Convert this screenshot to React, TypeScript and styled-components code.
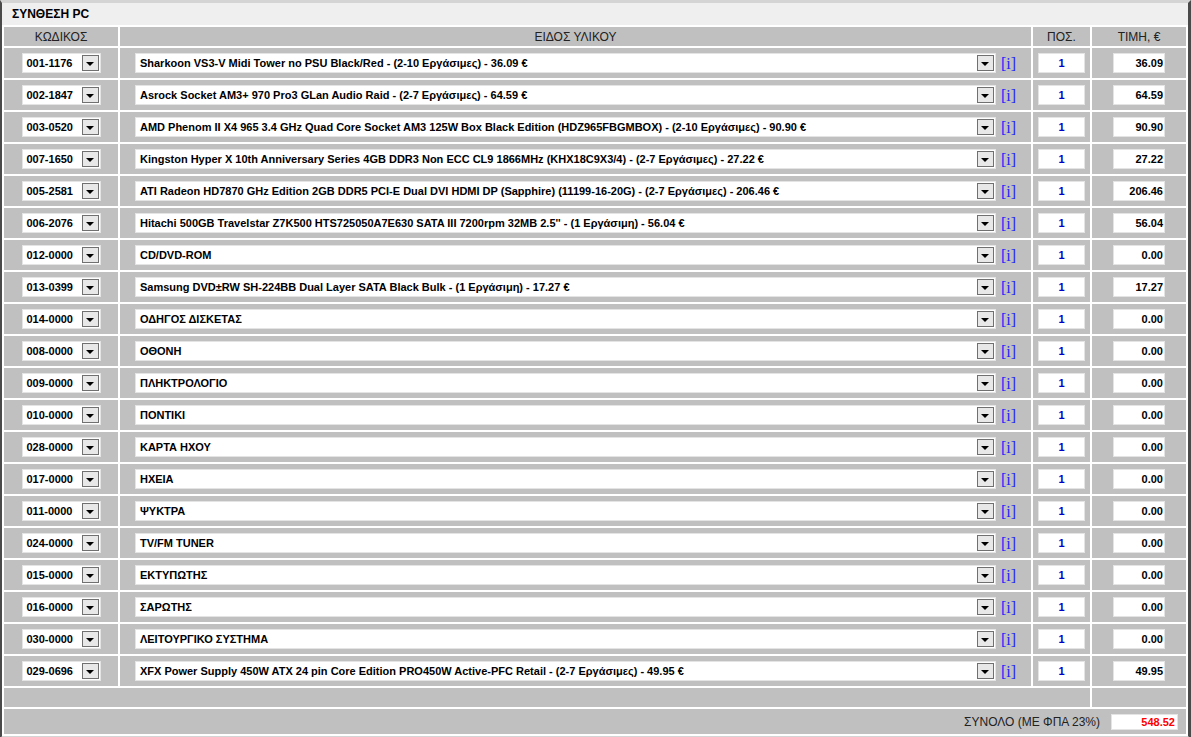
import React from 'react'
import styled, { createGlobalStyle } from 'styled-components'

interface Row {
  code: string
  name: string
  price: string
}

const rows: Row[] = [
  { code: '001-1176', name: 'Sharkoon VS3-V Midi Tower no PSU Black/Red - (2-10 Εργάσιμες) - 36.09 €', price: '36.09' },
  { code: '002-1847', name: 'Asrock Socket AM3+ 970 Pro3 GLan Audio Raid - (2-7 Εργάσιμες) - 64.59 €', price: '64.59' },
  {
    code: '003-0520',
    name: 'AMD Phenom II X4 965 3.4 GHz Quad Core Socket AM3 125W Box Black Edition (HDZ965FBGMBOX) - (2-10 Εργάσιμες) - 90.90 €',
    price: '90.90',
  },
  {
    code: '007-1650',
    name: 'Kingston Hyper X 10th Anniversary Series 4GB DDR3 Non ECC CL9 1866MHz (KHX18C9X3/4) - (2-7 Εργάσιμες) - 27.22 €',
    price: '27.22',
  },
  {
    code: '005-2581',
    name: 'ATI Radeon HD7870 GHz Edition 2GB DDR5 PCI-E Dual DVI HDMI DP (Sapphire) (11199-16-20G) - (2-7 Εργάσιμες) - 206.46 €',
    price: '206.46',
  },
  {
    code: '006-2076',
    name: "Hitachi 500GB Travelstar Z7K500 HTS725050A7E630 SATA III 7200rpm 32MB 2.5'' - (1 Εργάσιμη) - 56.04 €",
    price: '56.04',
  },
  { code: '012-0000', name: 'CD/DVD-ROM', price: '0.00' },
  { code: '013-0399', name: 'Samsung DVD±RW SH-224BB Dual Layer SATA Black Bulk - (1 Εργάσιμη) - 17.27 €', price: '17.27' },
  { code: '014-0000', name: 'ΟΔΗΓΟΣ ΔΙΣΚΕΤΑΣ', price: '0.00' },
  { code: '008-0000', name: 'ΟΘΟΝΗ', price: '0.00' },
  { code: '009-0000', name: 'ΠΛΗΚΤΡΟΛΟΓΙΟ', price: '0.00' },
  { code: '010-0000', name: 'ΠΟΝΤΙΚΙ', price: '0.00' },
  { code: '028-0000', name: 'ΚΑΡΤΑ ΗΧΟΥ', price: '0.00' },
  { code: '017-0000', name: 'ΗΧΕΙΑ', price: '0.00' },
  { code: '011-0000', name: 'ΨΥΚΤΡΑ', price: '0.00' },
  { code: '024-0000', name: 'TV/FM TUNER', price: '0.00' },
  { code: '015-0000', name: 'ΕΚΤΥΠΩΤΗΣ', price: '0.00' },
  { code: '016-0000', name: 'ΣΑΡΩΤΗΣ', price: '0.00' },
  { code: '030-0000', name: 'ΛΕΙΤΟΥΡΓΙΚΟ ΣΥΣΤΗΜΑ', price: '0.00' },
  {
    code: '029-0696',
    name: 'XFX Power Supply 450W ATX 24 pin Core Edition PRO450W Active-PFC Retail - (2-7 Εργάσιμες) - 49.95 €',
    price: '49.95',
  },
]

const GlobalStyle = createGlobalStyle`
  body {
    margin: 0;
    background: #fff;
    font-family: "Liberation Sans", Arial, sans-serif;
    font-size: 11px;
    color: #111;
  }
`

export default function App() {
  return (
    <>
      <GlobalStyle />
      <Frame>
        <TitleBar>ΣΥΝΘΕΣΗ PC</TitleBar>
        <Table>
          <colgroup>
            <col style={{ width: 114 }} />
            <col style={{ width: 911 }} />
            <col style={{ width: 57 }} />
            <col style={{ width: 94 }} />
          </colgroup>
          <thead>
            <tr>
              <HeadCell>ΚΩΔΙΚΟΣ</HeadCell>
              <HeadCell>ΕΙΔΟΣ ΥΛΙΚΟΥ</HeadCell>
              <HeadCell>ΠΟΣ.</HeadCell>
              <HeadCell>ΤΙΜΗ, €</HeadCell>
            </tr>
          </thead>
          <tbody>
            {rows.map((row) => (
              <tr key={row.code}>
                <Cell>
                  <Centered>
                    <FakeSelect $width={79}>
                      <SelectText>{row.code}</SelectText>
                      <DropButton>
                        <Arrow />
                      </DropButton>
                    </FakeSelect>
                  </Centered>
                </Cell>
                <Cell>
                  <Centered>
                    <FakeSelect $width={861}>
                      <SelectText>{row.name}</SelectText>
                      <DropButton>
                        <Arrow />
                      </DropButton>
                    </FakeSelect>
                    <InfoLink>[i]</InfoLink>
                  </Centered>
                </Cell>
                <Cell>
                  <Centered>
                    <QtyBox>1</QtyBox>
                  </Centered>
                </Cell>
                <Cell>
                  <Centered>
                    <PriceBox>{row.price}</PriceBox>
                  </Centered>
                </Cell>
              </tr>
            ))}
            <tr>
              <SpacerCell colSpan={3} />
              <SpacerCell />
            </tr>
            <tr>
              <TotalCell colSpan={4}>
                <TotalLine>
                  <TotalLabel>ΣΥΝΟΛΟ (ΜΕ ΦΠΑ 23%)</TotalLabel>
                  <TotalBox>548.52</TotalBox>
                </TotalLine>
              </TotalCell>
            </tr>
          </tbody>
        </Table>
      </Frame>
    </>
  )
}

const Frame = styled.div`
  width: 1191px;
  box-sizing: border-box;
  border-top: 3px solid #d4d4d4;
  border-left: 2px solid #4a4a4a;
  border-right: 3px solid #4a4a4a;
  border-bottom: 3px solid #d4d4d4;
  background: #fff;
`

const TitleBar = styled.div`
  height: 22px;
  background: #efefef;
  padding-left: 10px;
  display: flex;
  align-items: center;
  font-size: 12px;
  font-weight: bold;
  color: #000;
`

const Table = styled.table`
  width: 100%;
  table-layout: fixed;
  border-collapse: separate;
  border-spacing: 2px;
`

const HeadCell = styled.th`
  height: 19px;
  padding: 0;
  background: #c0c0c0;
  font-size: 12px;
  font-weight: normal;
  color: #222;
  text-align: center;
  vertical-align: middle;
`

const Cell = styled.td`
  height: 30px;
  padding: 0;
  background: #c0c0c0;
`

const SpacerCell = styled.td`
  height: 19px;
  padding: 0;
  background: #c0c0c0;
`

const TotalCell = styled.td`
  height: 25px;
  padding: 0 8px 0 0;
  background: #c0c0c0;
`

const Centered = styled.div`
  display: flex;
  align-items: center;
  justify-content: center;
`

const FakeSelect = styled.div<{ $width: number }>`
  width: ${(p) => p.$width}px;
  height: 20px;
  box-sizing: border-box;
  background: #fff;
  border: 1px solid #e4e4e4;
  display: flex;
  align-items: center;
`

const SelectText = styled.div`
  flex: 1;
  min-width: 0;
  padding-left: 4px;
  font-weight: bold;
  color: #000;
  white-space: nowrap;
  overflow: hidden;
`

const DropButton = styled.div`
  width: 17px;
  height: 16px;
  margin-right: 1px;
  box-sizing: border-box;
  border: 1px solid #707070;
  background: #e8e8e8;
  display: flex;
  align-items: center;
  justify-content: center;
`

const Arrow = styled.div`
  width: 0;
  height: 0;
  margin-top: 2px;
  border-left: 4px solid transparent;
  border-right: 4px solid transparent;
  border-top: 4px solid #000;
`

const InfoLink = styled.a`
  margin-left: 5px;
  align-self: flex-start;
  margin-top: 3px;
  font-family: "Liberation Serif", "Times New Roman", serif;
  font-size: 16px;
  line-height: 16px;
  color: #2323ff;
  cursor: pointer;
`

const QtyBox = styled.div`
  width: 47px;
  height: 20px;
  box-sizing: border-box;
  background: #fff;
  border: 1px solid #e4e4e4;
  display: flex;
  align-items: center;
  justify-content: center;
  font-weight: bold;
  color: #0000cc;
`

const PriceBox = styled.div`
  width: 52px;
  height: 20px;
  box-sizing: border-box;
  background: #fff;
  border: 1px solid #e4e4e4;
  display: flex;
  align-items: center;
  justify-content: flex-end;
  padding-right: 1px;
  font-weight: bold;
  color: #000;
`

const TotalLine = styled.div`
  display: flex;
  align-items: center;
  justify-content: flex-end;
  gap: 11px;
`

const TotalLabel = styled.span`
  font-size: 12px;
  color: #222;
`

const TotalBox = styled.div`
  width: 67px;
  height: 16px;
  box-sizing: border-box;
  background: #fff;
  border: 1px solid #e4e4e4;
  display: flex;
  align-items: center;
  justify-content: flex-end;
  padding-right: 2px;
  font-weight: bold;
  color: #ff0000;
`
